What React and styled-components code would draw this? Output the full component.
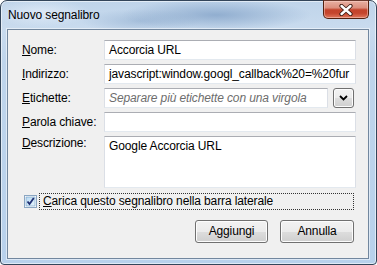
import React from "react";
import styled, { createGlobalStyle } from "styled-components";

const Global = createGlobalStyle`
  html, body { margin: 0; padding: 0; background: #ffffff; }
  body {
    width: 377px; height: 265px; overflow: hidden;
    font-family: "Liberation Sans", Arial, sans-serif;
    font-size: 12px; color: #000;
    letter-spacing: -0.12px;
  }
  * { box-sizing: border-box; }
`;

const Window = styled.div`
  width: 377px;
  height: 265px;
  border: 1px solid #33455a;
  border-radius: 7px 7px 4px 4px;
  padding: 0 7px 5px 6px;
  display: flex;
  flex-direction: column;
  box-shadow: inset 0 0 0 1px rgba(255, 255, 255, 0.55);
  background:
    radial-gradient(ellipse 95px 16px at 215px 14px, rgba(128, 160, 198, 0.75), rgba(128, 160, 198, 0) 100%),
    radial-gradient(ellipse 60px 12px at 140px 20px, rgba(146, 175, 208, 0.6), rgba(146, 175, 208, 0) 100%),
    radial-gradient(ellipse 50px 14px at 40px 12px, rgba(232, 240, 250, 0.7), rgba(232, 240, 250, 0) 100%),
    linear-gradient(to bottom, #bfd4ea 0px, #c9dbee 28px, #bfd5ec 60px, #b8d1ec 100%);
`;

const TitleBar = styled.div`
  height: 28px;
  display: flex;
  align-items: flex-start;
  justify-content: space-between;
  flex: none;
`;

const Title = styled.div`
  margin: 7px 0 0 1px;
  line-height: 15px;
  font-size: 12px;
  color: #000;
`;

const CloseButton = styled.div`
  width: 46px;
  height: 19px;
  margin-top: -1px;
  border: 1px solid #52200f;
  border-top-color: #6b3a2e;
  border-radius: 0 0 5px 5px;
  display: flex;
  align-items: center;
  justify-content: center;
  box-shadow: inset 0 0 0 1px rgba(255, 220, 210, 0.45);
  background: linear-gradient(
    to bottom,
    #e8b0a2 0%,
    #dc8f7e 40%,
    #c3432b 52%,
    #c5452d 72%,
    #e0785d 100%
  );
`;

const Client = styled.div`
  height: 230px;
  flex: none;
  border: 1px solid #72879e;
  background: #f0f0f0;
  padding: 10px 12px 0 14px;
  display: flex;
  flex-direction: column;
  box-shadow: 0 0 0 1px rgba(255, 255, 255, 0.5);
`;

const Form = styled.div`
  display: grid;
  grid-template-columns: 82px 1fr;
  row-gap: 4px;
`;

const Label = styled.div`
  line-height: 15px;
  align-self: ${(p) => (p.$top ? "start" : "center")};
  white-space: nowrap;
  u { text-decoration: underline; text-underline-offset: 1px; }
`;

const Field = styled.div`
  height: ${(p) => p.$h || 20}px;
  background: #fff;
  border: 1px solid #dbdfe6;
  border-top-color: #abadb3;
  border-bottom-color: #e3e9ef;
  padding: ${(p) => (p.$multi ? "2px 4px" : "0 3px 0 4px")};
  line-height: ${(p) => (p.$multi ? "15px" : "18px")};
  white-space: nowrap;
  overflow: hidden;
  flex: 1;
  min-width: 0;
  color: ${(p) => (p.$placeholder ? "#6d6d6d" : "#000")};
  font-style: ${(p) => (p.$placeholder ? "italic" : "normal")};
`;

const FieldRow = styled.div`
  display: flex;
  align-items: center;
  gap: 5px;
`;

const DropButton = styled.div`
  width: 21px;
  height: 20px;
  margin-right: 2px;
  flex: none;
  border: 1px solid #707070;
  border-radius: 3px;
  display: flex;
  align-items: center;
  justify-content: center;
  box-shadow: inset 0 0 0 1px #fcfcfc;
  background: linear-gradient(to bottom, #f2f2f2 0%, #ebebeb 50%, #dddddd 51%, #cfcfcf 100%);
`;

const CheckRow = styled.div`
  margin-top: 5px;
  margin-right: 2px;
  display: flex;
  align-items: center;
  gap: 2px;
  padding-left: 2px;
`;

const CheckLabel = styled.div`
  flex: 1;
  height: 17px;
  line-height: 15px;
  border: 1px dotted #333;
  padding-left: 3px;
  white-space: nowrap;
  u { text-decoration: underline; text-underline-offset: 1px; }
`;

const Buttons = styled.div`
  margin-top: 10px;
  margin-right: 2px;
  display: flex;
  justify-content: flex-end;
  gap: 12px;
`;

const Button = styled.div`
  width: ${(p) => p.$w}px;
  height: 23px;
  border: 1px solid #707070;
  border-radius: 3px;
  display: flex;
  align-items: center;
  justify-content: center;
  line-height: 15px;
  box-shadow: inset 0 0 0 1px #fcfcfc;
  background: linear-gradient(to bottom, #f2f2f2 0%, #ebebeb 50%, #dddddd 51%, #cfcfcf 100%);
`;

const CloseGlyph = () => (
  <svg width="16" height="12" viewBox="0 0 16 12">
    <path d="M3.5 2 L12.5 10 M12.5 2 L3.5 10" stroke="#3b1a12" strokeWidth="4.2" strokeLinecap="round" fill="none" />
    <path d="M3.5 2 L12.5 10 M12.5 2 L3.5 10" stroke="#ffffff" strokeWidth="2.4" strokeLinecap="round" fill="none" />
  </svg>
);

const Chevron = () => (
  <svg width="9" height="6" viewBox="0 0 9 6">
    <path d="M1 1 L4.5 4.5 L8 1" stroke="#000" strokeWidth="1.8" fill="none" />
  </svg>
);

const CheckBox = () => (
  <svg width="13" height="13" viewBox="0 0 13 13" style={{ flex: "none" }}>
    <defs>
      <linearGradient id="cbg" x1="0" y1="0" x2="1" y2="1">
        <stop offset="0" stopColor="#b9d9f2" />
        <stop offset="1" stopColor="#e6f4fc" />
      </linearGradient>
    </defs>
    <rect x="0.5" y="0.5" width="12" height="12" fill="#fff" stroke="#8aa6c2" />
    <rect x="2" y="2" width="9" height="9" fill="url(#cbg)" stroke="#6d9ac4" strokeWidth="0.6" />
    <path d="M3.5 6.5 L5.5 9 L9.8 3" stroke="#1e2f72" strokeWidth="1.8" fill="none" />
  </svg>
);

export default function App() {
  return (
    <>
      <Global />
      <Window>
        <TitleBar>
          <Title>Nuovo segnalibro</Title>
          <CloseButton>
            <CloseGlyph />
          </CloseButton>
        </TitleBar>
        <Client>
          <Form>
            <Label><u>N</u>ome:</Label>
            <Field>Accorcia URL</Field>

            <Label><u>I</u>ndirizzo:</Label>
            <Field>javascript:window.googl_callback%20=%20fur</Field>

            <Label><u>E</u>tichette:</Label>
            <FieldRow>
              <Field $placeholder>Separare più etichette con una virgola</Field>
              <DropButton>
                <Chevron />
              </DropButton>
            </FieldRow>

            <Label><u>P</u>arola chiave:</Label>
            <Field />

            <Label $top><u>D</u>escrizione:</Label>
            <Field $h={52} $multi>Google Accorcia URL</Field>
          </Form>
          <CheckRow>
            <CheckBox />
            <CheckLabel><u>C</u>arica questo segnalibro nella barra laterale</CheckLabel>
          </CheckRow>
          <Buttons>
            <Button $w={73}>Aggiungi</Button>
            <Button $w={74}>Annulla</Button>
          </Buttons>
        </Client>
      </Window>
    </>
  );
}
